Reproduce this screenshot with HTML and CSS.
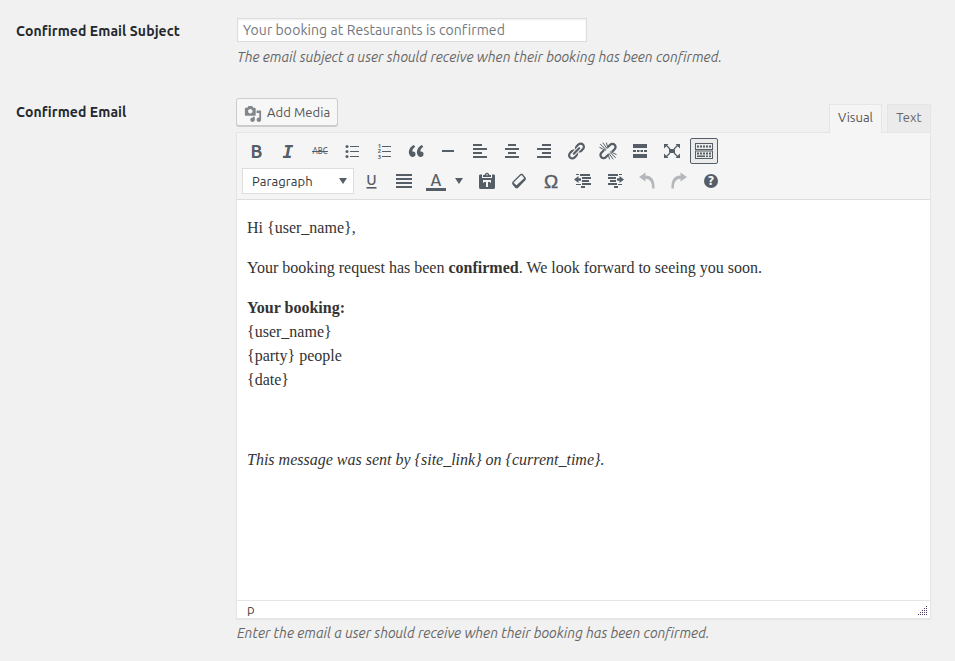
FILE: index.html
```html
<!DOCTYPE html>
<html lang="en">
<head>
<meta charset="utf-8">
<title>Booking Notifications</title>
<link rel="stylesheet" href="styles.css">
</head>
<body>
<main class="form">
  <div class="row subject-row">
    <label class="label" for="subject">Confirmed Email Subject</label>
    <div class="field">
      <input class="subject" id="subject" type="text" value="Your booking at Restaurants is confirmed">
      <p class="description">The email subject a user should receive when their booking has been confirmed.</p>
    </div>
  </div>
  <div class="row email-row">
    <div class="label">Confirmed Email</div>
    <div class="field">
      <div class="tools">
        <button class="media-button" type="button">
          <svg width="18" height="18" viewBox="0 0 20 20"><path fill-rule="evenodd" d="M13 11V4c0-.55-.45-1-1-1h-1.67L9 1H5L3.67 3H2c-.55 0-1 .45-1 1v7c0 .55.45 1 1 1h10c.55 0 1-.45 1-1zM7 4.500c1.380 0 2.500 1.120 2.500 2.500S8.380 9.500 7 9.500 4.500 8.380 4.500 7 5.620 4.500 7 4.500zM14 6h5v10.500c0 1.380-1.120 2.500-2.500 2.500S14 17.880 14 16.500s1.120-2.500 2.500-2.500c.17 0 .34.02.5.05V9h-3V6zm-4 8.050V13h2v3.500c0 1.380-1.120 2.500-2.500 2.500S7 17.880 7 16.500 8.120 14 9.500 14c.17 0 .34.02.5.050z"/></svg>
          <span>Add Media</span>
        </button>
        <div class="tabs">
          <button class="tab active" type="button">Visual</button>
          <button class="tab text-tab" type="button">Text</button>
        </div>
      </div>
      <div class="editor">
        <div class="toolbar">
          <div class="tool-row">
            <span class="tool"><svg viewBox="0 0 20 20"><text x="10.500" y="17" class="bold">B</text></svg></span>
            <span class="tool"><svg viewBox="0 0 20 20"><text x="10" y="17" class="italic">I</text></svg></span>
            <span class="tool"><svg viewBox="0 0 20 20"><text x="10" y="13" class="strike" textLength="15" lengthAdjust="spacingAndGlyphs">ABC</text><path d="M2 10h16v1H2z"/></svg></span>
            <span class="tool"><svg viewBox="0 0 20 20"><circle cx="5" cy="5.500" r="1.500"/><circle cx="5" cy="10.500" r="1.500"/><circle cx="5" cy="15.500" r="1.500"/><path d="M8 5h9v1H8zM8 10h9v1H8zM8 15h9v1H8z"/></svg></span>
            <span class="tool"><svg viewBox="0 0 20 20"><text x="5.500" y="7" class="num">1</text><text x="5.500" y="12.300" class="num">2</text><text x="5.500" y="17.600" class="num">3</text><path d="M8 5h9v1H8zM8 10h9v1H8zM8 15h9v1H8z"/></svg></span>
            <span class="tool"><svg viewBox="0 0 20 20"><path d="M9.490 13.220c0-.74-.2-1.380-.61-1.900-.62-.78-1.830-.88-2.530-.72-.29-1.650 1.110-3.750 2.920-4.650L7.880 4c-2.730 1.300-5.420 4.280-4.960 8.050C3.210 14.430 4.590 16 6.540 16c.85 0 1.560-.25 2.120-.75s.83-1.180.83-2.030zm8.050 0c0-.74-.2-1.380-.61-1.900-.63-.78-1.830-.88-2.530-.72-.29-1.650 1.110-3.750 2.920-4.650L15.930 4c-2.730 1.300-5.410 4.280-4.950 8.050.29 2.380 1.660 3.950 3.610 3.950.85 0 1.560-.25 2.120-.75s.83-1.180.83-2.030z"/></svg></span>
            <span class="tool"><svg viewBox="0 0 20 20"><path d="M4 9h12v2H4z"/></svg></span>
            <span class="tool"><svg viewBox="0 0 20 20"><path d="M3 3h9v2H3zM3 7h14v2H3zM3 11h9v2H3zM3 15h14v2H3z"/></svg></span>
            <span class="tool"><svg viewBox="0 0 20 20"><path d="M6 3h8v2H6zM3 7h14v2H3zM6 11h8v2H6zM3 15h14v2H3z"/></svg></span>
            <span class="tool"><svg viewBox="0 0 20 20"><path d="M8 3h9v2H8zM3 7h14v2H3zM8 11h9v2H8zM3 15h14v2H3z"/></svg></span>
            <span class="tool"><svg viewBox="0 0 20 20"><path d="M17.740 2.760c1.680 1.690 1.680 4.410 0 6.100l-1.530 1.520c-1.120 1.120-2.700 1.470-4.140 1.090l4.140-4.140c.84-.84.84-2.200 0-3.040-.84-.85-2.200-.85-3.040 0L9.020 8.430c-.37-1.440-.02-3.020 1.100-4.140l1.520-1.530c1.690-1.680 4.420-1.680 6.100 0zM8.590 13.430l5.340-5.340c.42-.42.42-1.100 0-1.520-.44-.43-1.130-.39-1.530 0l-5.330 5.340c-.42.42-.42 1.100 0 1.520.44.43 1.130.39 1.520 0zm-.76 2.290l4.140-4.150c.38 1.440.03 3.020-1.090 4.140l-1.520 1.530c-1.690 1.680-4.410 1.680-6.100 0-1.680-1.680-1.680-4.420 0-6.100l1.530-1.520c1.120-1.120 2.700-1.470 4.140-1.100l-4.140 4.150c-.85.84-.85 2.200 0 3.050.84.84 2.200.84 3.040 0z"/></svg></span>
            <span class="tool"><svg viewBox="0 0 20 20"><g class="line"><path stroke-width="2.300" d="M10.200 5.800l2-2c1.200-1.200 3.200-1.200 4.400 0s1.200 3.200 0 4.400l-2 2M9.800 14.200l-2 2c-1.200 1.200-3.200 1.200-4.400 0s-1.200-3.200 0-4.400l2-2"/><path stroke-width="1" d="M2.500 3.500L8 8.500M5 2l4 5.500M1.800 6.500l5.500 2.700M8.500 2l1.200 4.500M17.500 16.500L12 11.500M15 18l-4-5.500M18.200 13.500l-5.500-2.700M11.500 18l-1.200-4.500"/></g></svg></span>
            <span class="tool"><svg viewBox="0 0 20 20"><path d="M3 3h14v4H3zM3 9h3v2H3zM7 9h2.500v2H7zM10.500 9H13v2h-2.500zM14 9h3v2h-3zM3 13h14v4H3z"/></svg></span>
            <span class="tool"><svg viewBox="0 0 20 20"><path d="M7 8h6v4H7zM2 3h4.500L5.200 4.300l3.200 3.200-.9.900-3.200-3.200L2 7.500zM18 3h-4.500l1.300 1.300-3.200 3.200.9.900 3.200-3.200L18 7.500zM2 17h4.500l-1.300-1.300 3.200-3.200-.9-.9-3.200 3.200L2 12.500zM18 17h-4.500l1.300-1.300-3.200-3.200.9-.9 3.200 3.200L18 12.500z"/></svg></span>
            <span class="tool pressed"><svg viewBox="0 0 20 20"><path fill-rule="evenodd" d="M1 2h18v7H1zM2 3v5h16V3zM1 9.500h18V18H1zM2 10.500V17h16v-6.500z"/><path d="M3 4.500h2v2H3zM6 4.500h2v2H6zM9 4.500h2v2H9zM12 4.500h2v2h-2zM15 4.500h2v2h-2zM3 11.500h2v2H3zM6 11.500h2v2H6zM9 11.500h2v2H9zM12 11.500h2v2h-2zM15 11.500h2v2h-2zM3 14.500h8v1.500H3zM12 14.500h2V16h-2zM15 14.500h2V16h-2z"/></svg></span>
          </div>
          <div class="tool-row">
            <div class="format"><span>Paragraph</span><svg width="8" height="6" viewBox="0 0 8 6"><path d="M0 0h8L4 6z"/></svg></div>
            <span class="tool"><svg viewBox="0 0 20 20"><text x="9.500" y="14" class="underlined">U</text><path d="M4.500 16h10v1.600h-10z"/></svg></span>
            <span class="tool"><svg viewBox="0 0 20 20"><path d="M2 3h16v2H2zM2 7h16v2H2zM2 11h16v2H2zM2 15h16v2H2z"/></svg></span>
            <span class="tool"><svg viewBox="0 0 20 20"><text x="10" y="15" class="color-letter">A</text><path d="M0 17h20v3H0z"/></svg></span>
            <span class="caret"><svg width="8" height="6" viewBox="0 0 8 6"><path d="M0 0h8L4 6z"/></svg></span>
            <span class="tool"><svg viewBox="0 0 20 20"><path fill-rule="evenodd" d="M12.400 4H14v2H6V4h1.600C7.900 2.700 8.600 1.700 10 1.700S12.100 2.700 12.400 4zM10 3a.8.8 0 1 0 0 1.600A.8.800 0 0 0 10 3zM3.500 3.500H5V7h10V3.500h1.500c.8 0 1.500.5 1.500 1.300V16.500c0 .8-.7 1.500-1.500 1.500h-13c-.8 0-1.500-.7-1.500-1.500V4.800c0-.8.700-1.300 1.500-1.300z"/><path class="cutout" d="M6 9h8v2.800h-1V11h-2v5H9v-5H7v.8H6z"/></svg></span>
            <span class="tool"><svg viewBox="0 0 20 20"><path class="line" stroke-width="1.300" stroke-linejoin="round" d="M11.800 3.500L4 11.200v1.600L7 16.500h1.300l7.700-8V7L13.200 3.500z"/><path d="M3.800 11l3.700 3.200 8.700-8 .3 2.500-7.800 8.200H6.800L3.500 13.200z"/></svg></span>
            <span class="tool"><svg viewBox="0 0 20 20"><text x="10" y="17" class="omega">Ω</text></svg></span>
            <span class="tool"><svg viewBox="0 0 20 20"><path d="M7 3h10v2H7zM9 6h9v2H9zM9 9h7v2H9zM9 12h9v2H9zM8 15h4v2H8zM1 8.500L5.500 5v2.300H8v2.500H5.500V12zM3 3h3v1H3zM3 13h5v1H3z"/></svg></span>
            <span class="tool"><svg viewBox="0 0 20 20"><path d="M3 3h10v2H3zM3 6h8v2H3zM5 9h6v2H5zM3 12h9v2H3zM9 15h4v2H9zM19 8.500L14.500 5v2.300H12v2.500h2.500V12zM14 3h3v1h-3zM13 13h4v1h-4z"/></svg></span>
            <span class="tool disabled"><svg viewBox="0 0 20 20"><path d="M2 6l6.500-4.500V4.600C14.500 4.600 18 9 17.500 17.500h-2.400C15.100 10.500 13 8 8.500 7.700V10.500z"/></svg></span>
            <span class="tool disabled"><svg viewBox="0 0 20 20"><path d="M18 6l-6.500-4.500V4.600C5.500 4.600 2 9 2.500 17.500h2.400C4.900 10.500 7 8 11.500 7.700V10.500z"/></svg></span>
            <span class="tool"><svg viewBox="0 0 20 20"><circle cx="10" cy="10" r="7"/><text x="10" y="14.400" class="question">?</text></svg></span>
          </div>
        </div>
        <article class="content">
          <p>Hi {user_name},</p>
          <p>Your booking request has been <strong>confirmed</strong>. We look forward to seeing you soon.</p>
          <p><strong>Your booking:</strong><br>{user_name}<br>{party} people<br>{date}</p>
          <p>&nbsp;</p>
          <p><em>This message was sent by {site_link} on {current_time}.</em></p>
        </article>
        <div class="status"><span>p</span>
          <svg width="10" height="9" viewBox="0 0 10 9" shape-rendering="crispEdges"><path d="M8 0h1v1H8zM6 2h1v1H6zM8 2h1v1H8zM4 4h1v1H4zM6 4h1v1H6zM8 4h1v1H8zM2 6h1v1H2zM4 6h1v1H4zM6 6h1v1H6zM8 6h1v1H8zM0 8h1v1H0zM2 8h1v1H2zM4 8h1v1H4zM6 8h1v1H6zM8 8h1v1H8z"/></svg>
        </div>
      </div>
      <p class="description email-description">Enter the email a user should receive when their booking has been confirmed.</p>
    </div>
  </div>
</main>
</body>
</html>
```
FILE: styles.css
```css
* { box-sizing: border-box; }
body {
  margin: 0;
  height: 661px;
  overflow: hidden;
  background: #f1f1f1;
  color: #444;
  font: 14px/20px Ubuntu, "Noto Sans", sans-serif;
}
p { margin: 0; }
button, input { font-family: inherit; margin: 0; }
.form { padding: 18px 24px 0 16px; }
.row { display: grid; grid-template-columns: 220px 695px; }
.subject-row { height: 80px; }
.label { padding-top: 3px; color: #23282d; font-weight: 600; font-size: 14px; letter-spacing: .09px; white-space: nowrap; }
.email-row .label { padding-top: 4px; }
.subject {
  display: block;
  width: 350px;
  height: 24px;
  margin-left: 1px;
  padding: 0 5px;
  border: 1px solid #ddd;
  background: #fff;
  box-shadow: inset 0 1px 2px rgba(0,0,0,.07);
  color: #72777c;
  font-size: 14px;
  letter-spacing: .08px;
}
.description {
  margin: 5px 0 0 1px;
  color: #666;
  font-style: italic;
  letter-spacing: .012px;
  white-space: nowrap;
}
.tools { display: flex; justify-content: space-between; height: 34px; }
.media-button {
  display: flex;
  align-items: center;
  gap: 5px;
  width: 102px;
  height: 28px;
  padding: 0 7px;
  border: 1px solid #ccc;
  border-radius: 3px;
  background: #f7f7f7;
  box-shadow: 0 1px 0 #ccc;
  color: #555;
  font-size: 13px;
  letter-spacing: .08px;
  white-space: nowrap;
}
.media-button svg { fill: #82878c; flex: none; margin-top: 3px; }
.tabs { display: flex; gap: 5px; align-items: flex-start; margin-top: 6px; }
.tab {
  height: 28px;
  padding: 0 0 3px;
  border: 1px solid #e5e5e5;
  border-bottom: 0;
  background: #ebebeb;
  color: #666;
  font-size: 13px;
}
.active {
  position: relative;
  z-index: 1;
  width: 53px;
  height: 29px;
  padding-bottom: 4px;
  background: #f5f5f5;
  color: #555;
}
.text-tab { width: 44px; }
.editor { border: 1px solid #e5e5e5; background: #fff; box-shadow: 0 1px 1px rgba(0,0,0,.04); }
.toolbar { height: 67px; padding: 3px 3px 0; border-bottom: 1px solid #ddd; background: #f5f5f5; }
.tool-row { display: flex; height: 30px; align-items: center; }
.tool { display: flex; align-items: center; justify-content: center; width: 32px; height: 30px; flex: none; }
.tool svg { width: 20px; height: 20px; flex: none; }
svg { fill: #555d66; overflow: visible; }
.tool text { text-anchor: middle; font-family: Ubuntu, "Noto Sans", sans-serif; }
.bold { font-size: 18px; font-weight: 700; }
.tool .italic { font: italic bold 18px "DejaVu Sans Mono", monospace; }
.strike { font-size: 9px; font-weight: 500; }
.num { font-size: 6px; font-weight: 600; }
.underlined { font-size: 15px; font-weight: 500; }
.color-letter { font-size: 16px; font-weight: 500; }
.tool .omega { font: 19px "Liberation Sans", sans-serif; stroke: #555d66; stroke-width: .4px; }
.question { fill: #f5f5f5; font-size: 13px; font-weight: 800; }
.line { fill: none; stroke: #555d66; stroke-linecap: round; }
.cutout { fill: #f5f5f5; }
.pressed { width: 28px; height: 26px; margin-left: 2px; border: 1px solid #555d66; border-radius: 2px; background: #ebebeb; }
.disabled { opacity: .4; }
.format {
  display: flex;
  align-items: center;
  justify-content: space-between;
  width: 112px;
  height: 26px;
  margin: 0 2px;
  padding: 0 6px 0 9px;
  border: 1px solid #ddd;
  background: #fff;
  color: #32373c;
  font-size: 13px;
  letter-spacing: .08px;
}
.caret { display: flex; justify-content: center; width: 14px; margin-right: 5px; }
.content {
  height: 400px;
  padding: 16px 10px 0;
  color: #333;
  font: 16px/24px "Liberation Serif", serif;
}
.content p { margin-bottom: 16px; }
.status {
  display: flex;
  align-items: center;
  justify-content: space-between;
  height: 18px;
  padding: 0 2px 1px 10px;
  border-top: 1px solid #e5e5e5;
  font-size: 13px;
}
.status svg { fill: #544060; margin-top: 3px; }
.email-description { margin-top: 4px; }
```
